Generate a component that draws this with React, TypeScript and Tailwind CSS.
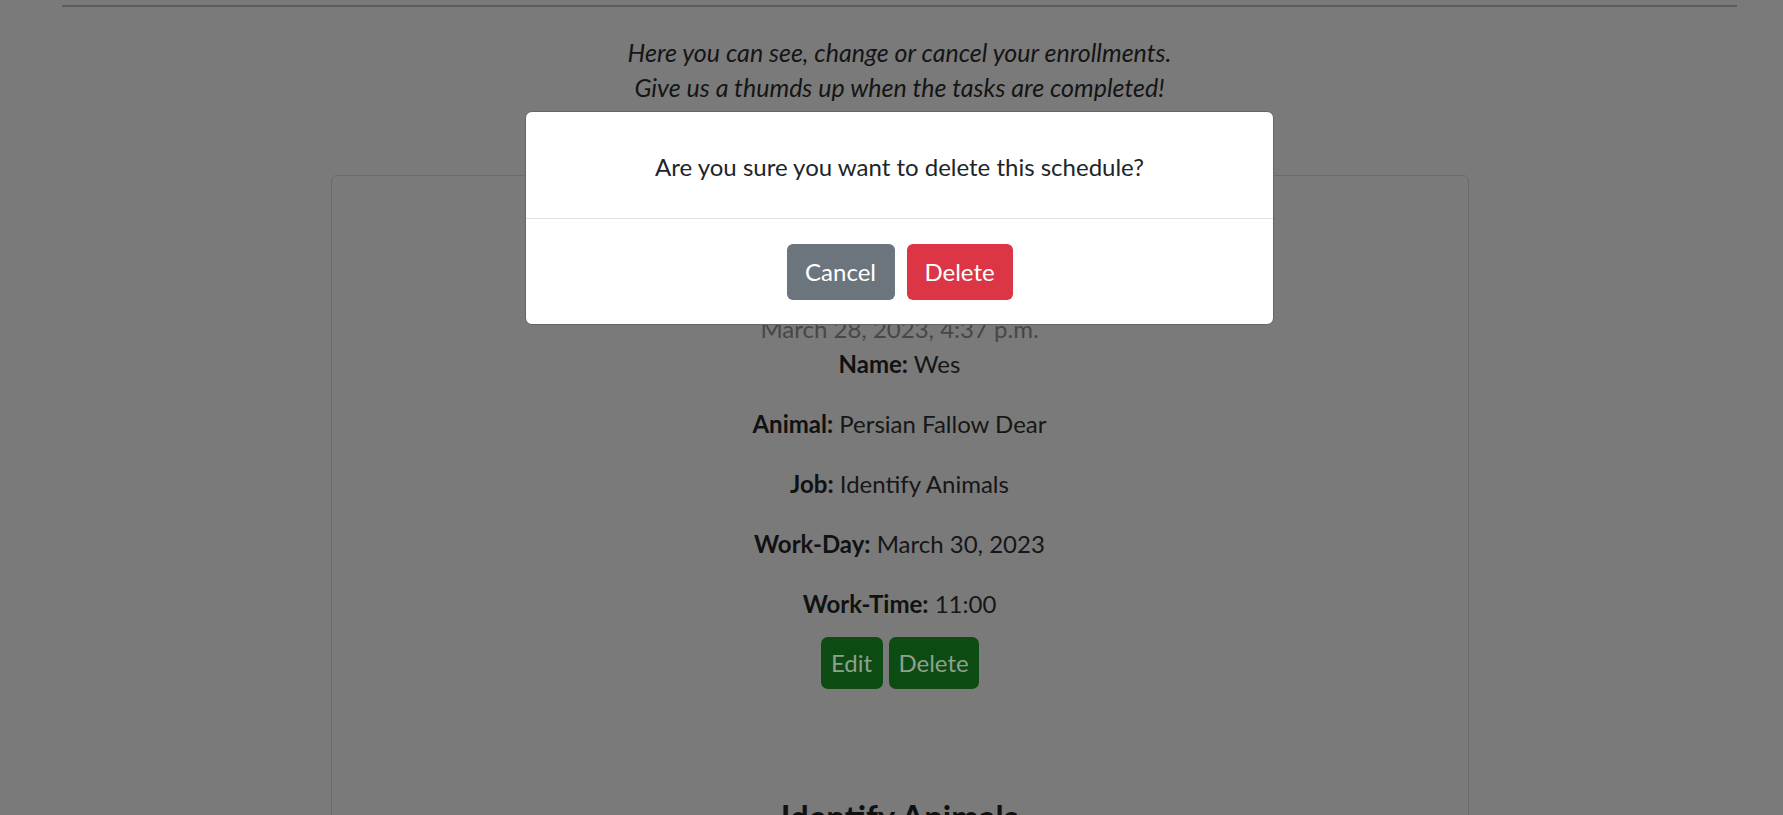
import React from "react";

const font = { fontFamily: '"Lato", "Open Sans", sans-serif' };

function Entry({ first }: { first?: boolean }) {
  return (
    <div className={first ? "" : "mt-[109px]"}>
      <h5 className="text-[33px] leading-[36px] font-bold text-[#111]">Identify Animals</h5>
      <div className="text-[24px] leading-[35px] text-[#474747]">March 28, 2023, 4:37 p.m.</div>
      <p className="text-[24px] leading-[36px] text-[#161616]">
        <span className="font-bold text-[#111]">Name:</span> Wes
      </p>
      <p className="mt-[24px] text-[24px] leading-[36px] text-[#161616]">
        <span className="font-bold text-[#111]">Animal:</span> Persian Fallow Dear
      </p>
      <p className="mt-[24px] text-[24px] leading-[36px] text-[#161616]">
        <span className="font-bold text-[#111]">Job:</span> Identify Animals
      </p>
      <p className="mt-[24px] text-[24px] leading-[36px] text-[#161616]">
        <span className="font-bold text-[#111]">Work-Day:</span> March 30, 2023
      </p>
      <p className="mt-[24px] text-[24px] leading-[36px] text-[#161616]">
        <span className="font-bold text-[#111]">Work-Time:</span> 11:00
      </p>
      <div className="mt-[15px] flex justify-center gap-[6px]">
        <button className="h-[52px] w-[62px] rounded-[7px] bg-[#0c4b12] text-[24px] text-[#8fa08f]">Edit</button>
        <button className="h-[52px] w-[90px] rounded-[7px] bg-[#0c4b12] text-[24px] text-[#8fa08f]">Delete</button>
      </div>
    </div>
  );
}

export default function App() {
  return (
    <div className="relative h-[815px] overflow-hidden bg-[#7a7a7a] pl-4" style={font}>
      <div className="mx-[46px] pt-[5px]">
        <div className="h-[2px] bg-[#5c5c5c]" />
      </div>
      <div className="mt-[27px] text-center text-[25px] italic leading-[36px] text-[#151515]">
        <p>Here you can see, change or cancel your enrollments.</p>
        <p className="-mt-[1px]">Give us a thumds up when the tasks are completed!</p>
      </div>
      <div className="mx-auto mt-[70px] w-[1138px] rounded-[6px] border border-[#6b6b6b] pt-[99px] text-center">
        <Entry first />
        <Entry />
      </div>

      <div className="absolute left-[525px] top-[111px] w-[749px] rounded-[7px] border border-[#666] bg-white">
        <div className="h-[106px] pt-[37px] text-center text-[24px] leading-[36px] text-[#212529]">
          Are you sure you want to delete this schedule?
        </div>
        <div className="flex justify-center gap-[12px] border-t border-[#dee2e6] pt-[25px] pb-[24px]">
          <button className="h-[56px] w-[108px] rounded-[6px] bg-[#6c757d] text-[24px] text-white">Cancel</button>
          <button className="h-[56px] w-[106px] rounded-[6px] bg-[#dc3545] text-[24px] text-white">Delete</button>
        </div>
      </div>
    </div>
  );
}
